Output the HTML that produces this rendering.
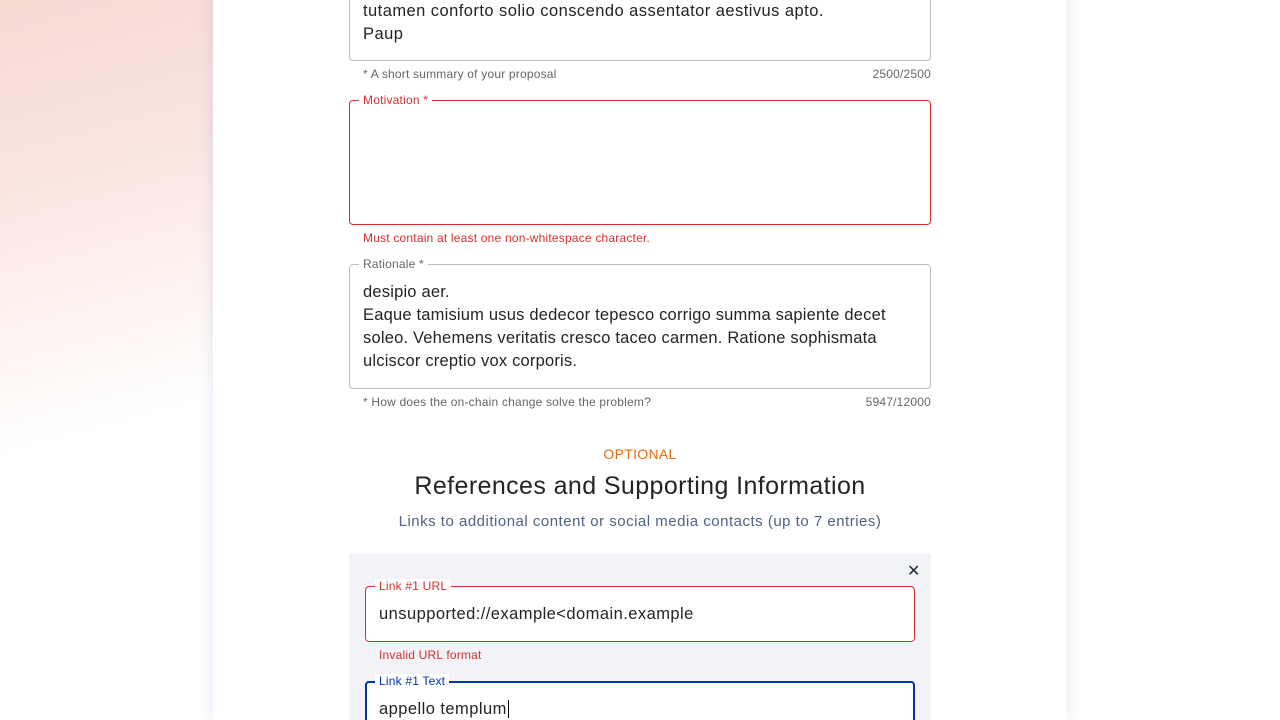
<!DOCTYPE html>
<html><head><style>
*{box-sizing:border-box;margin:0;padding:0}
html,body{width:1280px;height:720px;overflow:hidden}
body{background:#fff;font-family:"Liberation Sans",sans-serif;position:relative;color:#242424}
.bg{position:absolute;left:0;top:0;width:260px;height:720px;background:linear-gradient(165deg,#f6d9d3 0%,#fae6e1 25%,#fdf3f0 42%,#fff 58%)}
.card{position:absolute;left:213px;top:-20px;width:854px;height:740px;background:#fff;box-shadow:0 0 14px rgba(140,150,220,.25)}
.abs{position:absolute}
.box{position:absolute;border:1px solid #bdbdbd;border-radius:4px;background:#fff}
.lbl{position:absolute;font-size:12px;background:#fff;padding:0 4px;line-height:14px;letter-spacing:.2px}
.t{font-size:16.5px;line-height:23px;color:#242424;letter-spacing:.45px}
.help{position:absolute;font-size:12px;color:#666;letter-spacing:.2px}
.r{text-align:right}
</style></head><body>
<div class="bg"></div>
<div class="card"></div>
<div class="box" style="left:349px;top:-10px;width:582px;height:71px"></div>
<div class="abs t" style="left:363px;top:0px">tutamen conforto solio conscendo assentator aestivus apto.<br>Paup</div>
<div class="help" style="left:363px;top:67px">* A short summary of your proposal</div>
<div class="help r" style="left:731px;width:200px;top:67px">2500/2500</div>

<div class="box" style="left:349px;top:100px;width:582px;height:125px;border-color:#d32f2f"></div>
<div class="lbl" style="left:359px;top:93px;color:#d32f2f">Motivation *</div>
<div class="help" style="left:363px;top:231px;color:#d32f2f">Must contain at least one non-whitespace character.</div>

<div class="box" style="left:349px;top:264px;width:582px;height:125px"></div>
<div class="lbl" style="left:359px;top:257px;color:#666">Rationale *</div>
<div class="abs t" style="left:363px;top:281px;letter-spacing:.2px">desipio aer.<br>Eaque tamisium usus dedecor tepesco corrigo summa sapiente decet<br>soleo. Vehemens veritatis cresco taceo carmen. Ratione sophismata<br>ulciscor creptio vox corporis.</div>
<div class="help" style="left:363px;top:395px">* How does the on-chain change solve the problem?</div>
<div class="help r" style="left:731px;width:200px;top:395px">5947/12000</div>

<div class="abs" style="left:0;width:1280px;top:446px;text-align:center;font-size:14px;color:#e8690f;letter-spacing:.3px">OPTIONAL</div>
<div class="abs" style="left:0;width:1280px;top:472px;text-align:center;font-size:25px;color:#242424;letter-spacing:.4px">References and Supporting Information</div>
<div class="abs" style="left:0;width:1280px;top:513px;text-align:center;font-size:15px;color:#506288;letter-spacing:.5px">Links to additional content or social media contacts (up to 7 entries)</div>

<div class="abs" style="left:349px;top:554px;width:582px;height:166px;background:#f2f3f6"></div>
<div class="abs" style="left:907px;top:561px;font-size:16px;color:#242c3a">✕</div>
<div class="box" style="left:365px;top:586px;width:550px;height:56px;border-color:#d32f2f"></div>
<div class="lbl" style="left:375px;top:579px;color:#d32f2f">Link #1 URL</div>
<div class="abs t" style="left:379px;top:603px">unsupported://example&lt;domain.example</div>
<div class="help" style="left:379px;top:648px;color:#d32f2f">Invalid URL format</div>
<div class="box" style="left:365px;top:681px;width:550px;height:60px;border:2px solid #0033ad"></div>
<div class="lbl" style="left:375px;top:674px;color:#0033ad">Link #1 Text</div>
<div class="abs t" style="left:379px;top:698px">appello templum<span style="border-left:1px solid #000;margin-left:1px"></span></div>
</body></html>
